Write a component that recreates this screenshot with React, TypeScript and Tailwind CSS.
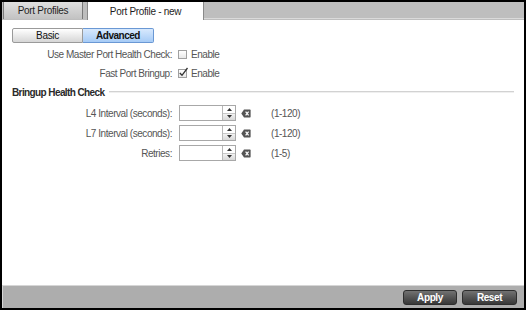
import React from "react";

const label = "w-[160px] shrink-0 text-right text-[10px] tracking-[-0.45px] text-[#555]";

function Checkbox({ checked }: { checked?: boolean }) {
  return (
    <span className="relative inline-block h-[9px] w-[9px] border border-[#a0a0a0] bg-gradient-to-b from-white to-[#e8e8e8]">
      {checked && (
        <svg className="absolute left-[-1px] top-[-3px]" width="11" height="11" viewBox="0 0 11 11">
          <path d="M1.8 6 L4 8.3 L9.5 1" fill="none" stroke="#333" strokeWidth="1.3" />
        </svg>
      )}
    </span>
  );
}

function ClearIcon() {
  return (
    <svg width="10" height="9" viewBox="0 0 10 9">
      <path d="M3 0.5 H9 Q9.6 0.5 9.6 1.2 V7.8 Q9.6 8.5 9 8.5 H3 L0.3 4.5 Z" fill="#555" />
      <path d="M4.6 2.6 L7.6 6.4 M7.6 2.6 L4.6 6.4" stroke="#fff" strokeWidth="1.2" />
    </svg>
  );
}

function SpinRow({ name, range }: { name: string; range: string }) {
  return (
    <div className="flex h-[20px] items-center">
      <span className={label}>{name}</span>
      <div className="ml-[7px] flex h-[16px] w-[57px] border border-[#a8a8a8] bg-white">
        <div className="flex-1" />
        <div className="flex w-[13px] flex-col border-l border-[#b8b8b8]">
          <div className="flex flex-1 items-center justify-center bg-white">
            <svg width="5" height="3" viewBox="0 0 5 3">
              <path d="M0 3 L2.5 0 L5 3 Z" fill="#333" />
            </svg>
          </div>
          <div className="flex flex-1 items-center justify-center border-t border-[#c8c8c8] bg-gradient-to-b from-[#f2f2f2] to-[#d8d8d8]">
            <svg width="5" height="3" viewBox="0 0 5 3">
              <path d="M0 0 L2.5 3 L5 0 Z" fill="#333" />
            </svg>
          </div>
        </div>
      </div>
      <span className="ml-[5px] flex">
        <ClearIcon />
      </span>
      <span className="ml-[20px] text-[10px] tracking-[-0.45px] text-[#555]">{range}</span>
    </div>
  );
}

export default function App() {
  return (
    <div className="h-[310px] w-[526px] bg-black p-[2px] font-['Liberation_Sans',Arial,sans-serif]">
      <div className="flex h-full flex-col bg-white">
        {/* tabs */}
        <div className="flex h-[18px] shrink-0 bg-[#bebebe]">
          <div className="ml-[1px] flex h-[17px] w-[80px] items-center justify-center border-x border-[#7a7a7a] bg-gradient-to-b from-[#e0e0e0] to-[#c2c2c2] text-[10px] tracking-[-0.3px] text-[#1e1e1e]">
            Port Profiles
          </div>
          <div className="ml-[4px] flex h-[18px] w-[117px] items-center justify-center border-x border-[#8a8a8a] bg-white text-[10px] tracking-[-0.3px] text-[#1e1e1e]">
            Port Profile - new
          </div>
          <div className="h-[17px] flex-1 border-b border-[#dadada]" />
        </div>

        {/* content */}
        <div className="flex flex-1 flex-col px-[10px] pt-[8px]">
          <div className="flex">
            <div className="flex h-[15px] w-[71px] items-center justify-center rounded-l-[2px] border border-[#9a9a9a] bg-gradient-to-b from-white to-[#d6d6d6] text-[10px] tracking-[-0.3px] text-[#111]">
              Basic
            </div>
            <div className="flex h-[15px] w-[71px] items-center justify-center rounded-r-[2px] border border-l-0 border-[#6a98d4] bg-gradient-to-b from-[#d8e9fd] to-[#a6cbf6] text-[10px] font-bold tracking-[-0.5px] text-[#111]">
              Advanced
            </div>
          </div>

          <div className="mt-[2px] flex h-[19px] items-center">
            <span className={label}>Use Master Port Health Check:</span>
            <span className="ml-[6px] flex">
              <Checkbox />
            </span>
            <span className="ml-[4px] text-[10px] tracking-[-0.45px] text-[#555]">Enable</span>
          </div>
          <div className="flex h-[19px] items-center">
            <span className={label}>Fast Port Bringup:</span>
            <span className="ml-[6px] flex">
              <Checkbox checked />
            </span>
            <span className="ml-[4px] text-[10px] tracking-[-0.45px] text-[#555]">Enable</span>
          </div>

          <div className="mt-[1px] flex h-[16px] items-center">
            <span className="text-[10px] font-bold tracking-[-0.6px] text-[#2a2a2a]">Bringup Health Check</span>
            <div className="ml-[5px] flex-1 border-t border-b border-t-[#d2d2d2] border-b-[#efefef]" />
          </div>

          <div className="mt-[3px] flex flex-col">
            <SpinRow name="L4 Interval (seconds):" range="(1-120)" />
            <SpinRow name="L7 Interval (seconds):" range="(1-120)" />
            <SpinRow name="Retries:" range="(1-5)" />
          </div>
        </div>

        {/* footer */}
        <div className="flex h-[23px] shrink-0 items-center justify-end gap-[5px] border-t border-l border-[#d6d6d6] bg-[#adadad] pr-[7px]">
          <button className="flex h-[15px] w-[54px] items-center justify-center rounded-[3px] border border-[#2e2e2e] bg-gradient-to-b from-[#727272] to-[#383838] text-[10px] font-bold tracking-[-0.4px] text-white">
            Apply
          </button>
          <button className="flex h-[15px] w-[55px] items-center justify-center rounded-[3px] border border-[#2e2e2e] bg-gradient-to-b from-[#727272] to-[#383838] text-[10px] font-bold tracking-[-0.4px] text-white">
            Reset
          </button>
        </div>
      </div>
    </div>
  );
}
